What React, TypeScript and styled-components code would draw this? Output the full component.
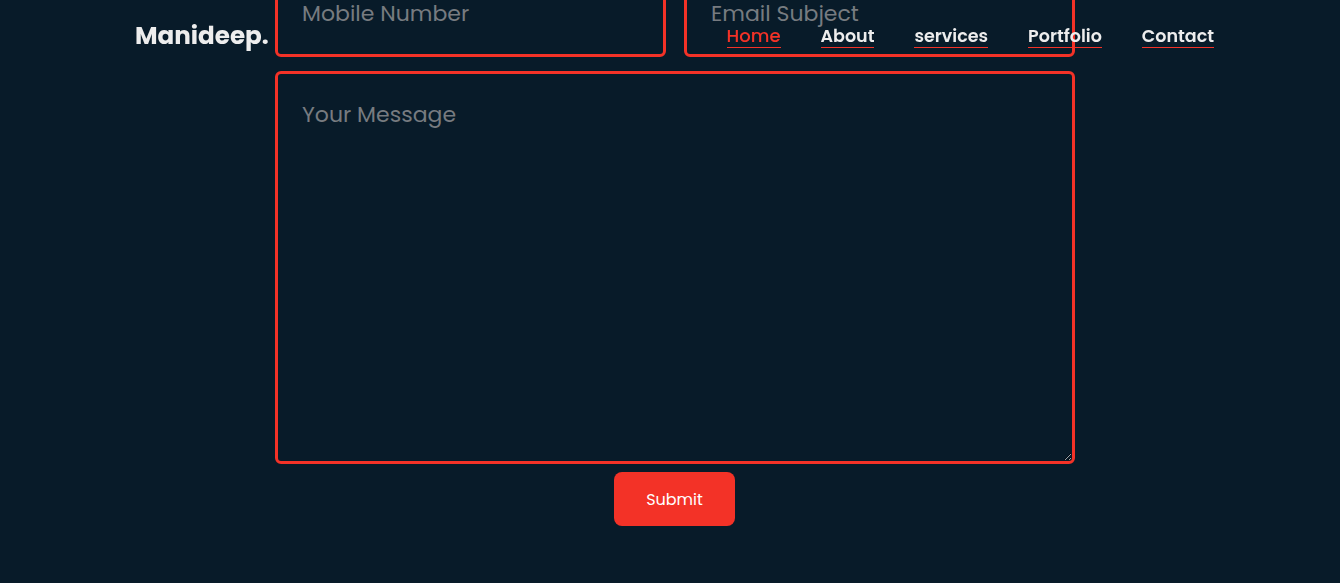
import React from "react";
import styled, { createGlobalStyle } from "styled-components";

const GlobalStyle = createGlobalStyle`
  * { box-sizing: border-box; margin: 0; padding: 0; }
  html, body { background: #081b29; overflow: hidden; }
  body { font-family: Poppins, Inter, "Noto Sans", sans-serif; color: #ededed; }
`;

const Header = styled.header`
  position: fixed;
  top: 0;
  left: 0;
  width: 100%;
  height: 70px;
  display: flex;
  align-items: center;
  justify-content: space-between;
  padding: 0 126px 0 135px;
  z-index: 10;
`;

const Logo = styled.a`
  font-size: 24.6px;
  font-weight: 700;
  color: #ededed;
  text-decoration: none;
`;

const Nav = styled.nav`
  display: flex;
  align-items: flex-end;
  gap: 40px;
  padding-top: 2px;
`;

const NavLink = styled.a<{ $active?: boolean }>`
  font-size: ${(p) => (p.$active ? "18px" : "17.5px")};
  font-weight: ${(p) => (p.$active ? 500 : 600)};
  line-height: 22px;
  color: ${(p) => (p.$active ? "#f33227" : "#ededed")};
  text-decoration: none;
  border-bottom: 1px solid #f33227;
`;

const Section = styled.section`
  min-height: 583px;
  display: flex;
  justify-content: center;
  padding-left: 10px;
  margin-top: -30px;
`;

const Form = styled.form`
  width: 800px;
  display: flex;
  flex-direction: column;
  align-items: center;
`;

const Row = styled.div`
  width: 100%;
  display: flex;
  justify-content: space-between;
  margin-bottom: 14px;
`;

const fieldStyles = `
  font-family: Poppins, Inter, "Noto Sans", sans-serif;
  font-size: 22px;
  line-height: 33px;
  color: #ededed;
  background: transparent;
  border: 3px solid #f33227;
  border-radius: 6px;
  padding: 24px;
  outline: none;
  &::placeholder { color: #777b80; opacity: 1; }
`;

const Input = styled.input`
  ${fieldStyles}
  width: 391px;
  height: 87px;
`;

const TextArea = styled.textarea`
  ${fieldStyles}
  width: 100%;
  height: 393px;
  display: block;
`;

const SubmitButton = styled.button`
  margin-top: 8px;
  margin-right: 1px;
  width: 121px;
  height: 54px;
  border: none;
  border-radius: 8px;
  background: #f33227;
  color: #fff;
  font-family: Poppins, Inter, "Noto Sans", sans-serif;
  font-size: 16px;
  font-weight: 400;
  cursor: pointer;
`;

export default function App() {
  const links = ["Home", "About", "services", "Portfolio", "Contact"];
  return (
    <>
      <GlobalStyle />
      <Header>
        <Logo href="#">Manideep.</Logo>
        <Nav>
          {links.map((l, i) => (
            <NavLink key={l} href="#" $active={i === 0}>
              {l}
            </NavLink>
          ))}
        </Nav>
      </Header>
      <Section>
        <Form onSubmit={(e) => e.preventDefault()}>
          <Row>
            <Input type="tel" placeholder="Mobile Number" />
            <Input type="text" placeholder="Email Subject" />
          </Row>
          <TextArea placeholder="Your Message" />
          <SubmitButton type="submit">Submit</SubmitButton>
        </Form>
      </Section>
    </>
  );
}
